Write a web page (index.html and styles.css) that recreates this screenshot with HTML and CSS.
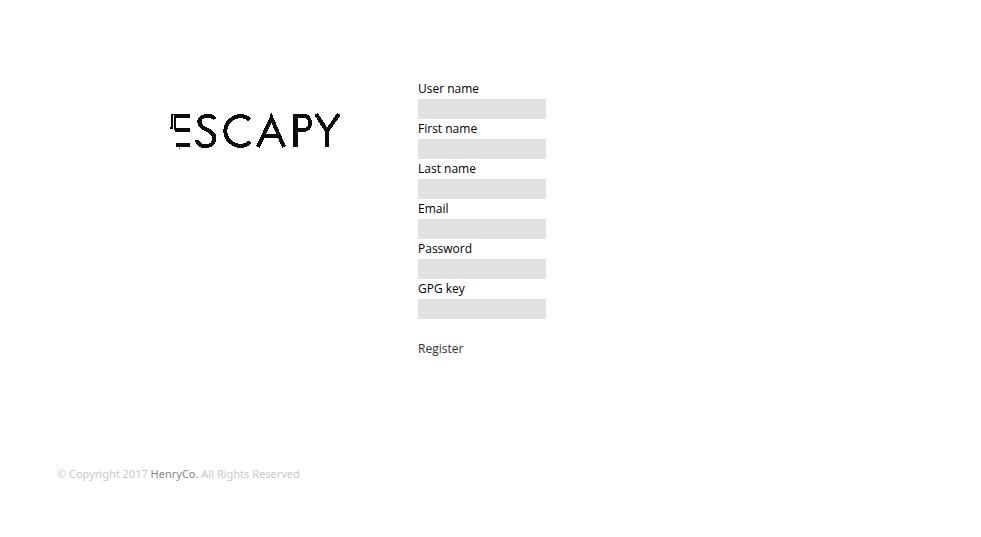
FILE: index.html
```html
<!DOCTYPE html>
<html lang="en">
<head>
<meta charset="utf-8">
<title>Escapy</title>
<link rel="stylesheet" href="styles.css">
</head>
<body>
<main class="content">
  <a class="brand" href="#" aria-label="Escapy">
    <svg class="logo" viewBox="0 0 174 42" width="174" height="42" aria-hidden="true" shape-rendering="crispEdges">
      <g fill="none" stroke="#0c0c0c" stroke-width="4">
        <path d="M8 6H22M7 20H22M8 35H22"/>
        <path stroke-width="1" d="M6.5 4V20M7.500 4V20M3 4.500H6M3.500 4V19M4.500 4V19M2.500 17V19M11 38.500H12"/>
        <path d="M47 9C45 6 42 5.500 38 6C30 7 30 13 34 17C38 20 47 22 46 28C46 35 42 36 37 36C32 36 30 34 29 30"/>
        <path d="M82 10C77 5 69 5 64 9C55 15 55 27 64 33C69 37 77 37 82 32"/>
        <path d="M90 37L103.500 8L116 37M95 26H112"/>
        <path stroke-width="1" d="M102.500 4V8"/>
        <path stroke-width="5" d="M127.500 4V37"/>
        <path d="M127 6H136C144 6 144 20 136 20H127"/>
        <path d="M148 4L159 21L171 4M159 19V37"/>
      </g>
    </svg>
  </a>
  <form class="form">
    <label for="username">User name</label>
    <input id="username" type="text">
    <label for="first">First name</label>
    <input id="first" type="text">
    <label for="last">Last name</label>
    <input id="last" type="text">
    <label for="email">Email</label>
    <input id="email" type="email">
    <label for="password">Password</label>
    <input id="password" type="password">
    <label for="gpg">GPG key</label>
    <input id="gpg" type="text">
    <button type="submit">Register</button>
  </form>
</main>
<footer class="footer">© Copyright 2017 <a href="#">HenryCo.</a> All Rights Reserved</footer>
</body>
</html>
```
FILE: styles.css
```css
body {
  margin: 0;
  padding: 79px 57px 0;
  background: #fff;
  color: #000;
  font: 12px/20px "Open Sans", "Noto Sans", sans-serif;
}
.content {
  display: flex;
  align-items: flex-start;
  gap: 76px;
  padding-left: 111px;
}
.brand {
  margin-top: 31px;
}
.logo {
  display: block;
}
.form {
  display: flex;
  flex-direction: column;
  align-items: flex-start;
}
.form input {
  box-sizing: border-box;
  width: 128px;
  height: 20px;
  padding: 0 4px;
  border: 0;
  background: #e1e1e1;
  font: inherit;
}
.form button {
  margin-top: 20px;
  padding: 0;
  border: 0;
  background: none;
  color: #333;
  font: inherit;
  cursor: pointer;
}
.footer {
  margin-top: 105px;
  color: #c8c8c8;
  font: 11px/20px "Noto Sans", sans-serif;
}
.footer a {
  color: #888;
  text-decoration: none;
}
```
